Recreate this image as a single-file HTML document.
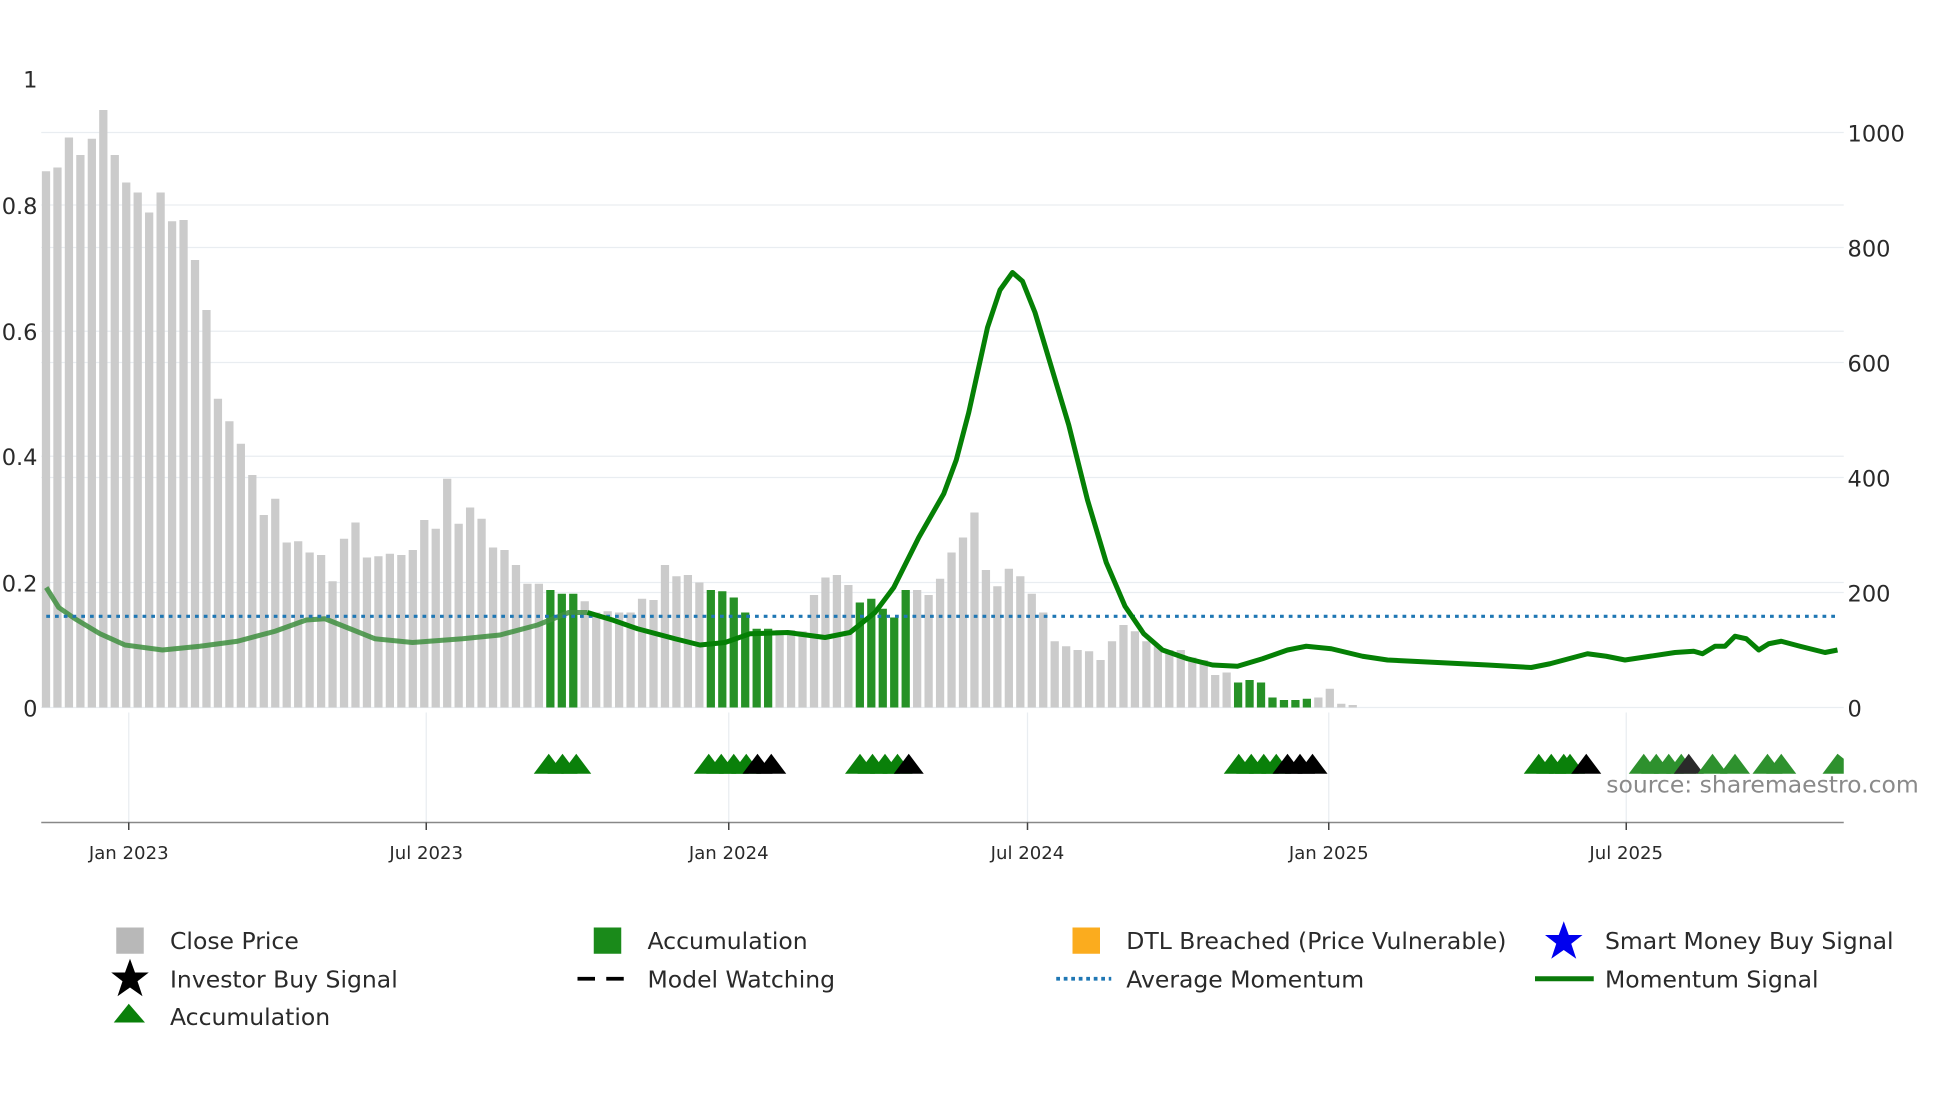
<!DOCTYPE html>
<html><head><meta charset="utf-8"><style>
html,body{margin:0;padding:0;background:#fff;overflow:hidden}
svg{display:block}
text{font-family:"DejaVu Sans","Liberation Sans",sans-serif;fill:#2a2a2a}
</style></head><body>
<svg id="s" width="1960" height="1102" viewBox="0 0 1568 881.6" xmlns="http://www.w3.org/2000/svg">
<g stroke="#e9edf1" stroke-width="1">
<line x1="33" x2="1475" y1="106" y2="106"/><line x1="33" x2="1475" y1="164" y2="164"/>
<line x1="33" x2="1475" y1="198" y2="198"/><line x1="33" x2="1475" y1="265" y2="265"/>
<line x1="33" x2="1475" y1="290" y2="290"/><line x1="33" x2="1475" y1="365" y2="365"/>
<line x1="33" x2="1475" y1="382" y2="382"/><line x1="33" x2="1475" y1="466" y2="466"/>
<line x1="33" x2="1475" y1="474" y2="474"/><line x1="33" x2="1475" y1="566" y2="566"/>
<line x1="103" x2="103" y1="570" y2="658"/><line x1="341" x2="341" y1="570" y2="658"/>
<line x1="583" x2="583" y1="570" y2="658"/><line x1="822" x2="822" y1="570" y2="658"/>
<line x1="1063" x2="1063" y1="570" y2="658"/><line x1="1301" x2="1301" y1="570" y2="658"/>
</g>
<g id="bars"></g>
<path id="m1" fill="none" stroke="#3f8f3f" stroke-width="4" stroke-linejoin="round" opacity="0.85" d=""/>
<line x1="37" x2="1472" y1="493" y2="493" stroke="#1f77b4" stroke-width="2.5" stroke-dasharray="3,4"/>
<path id="m2" fill="none" stroke="#058005" stroke-width="4" stroke-linejoin="round" d=""/>
<g id="tri"></g>
<line x1="33" x2="1475" y1="658" y2="658" stroke="#888" stroke-width="1.2"/>
<g stroke="#444" stroke-width="1.2">
<line x1="103" x2="103" y1="658" y2="664"/><line x1="341" x2="341" y1="658" y2="664"/>
<line x1="583" x2="583" y1="658" y2="664"/><line x1="822" x2="822" y1="658" y2="664"/>
<line x1="1063" x2="1063" y1="658" y2="664"/><line x1="1301" x2="1301" y1="658" y2="664"/>
</g>
<g font-size="14.5" text-anchor="middle">
<text x="103" y="687">Jan 2023</text><text x="341" y="687">Jul 2023</text>
<text x="583" y="687">Jan 2024</text><text x="822" y="687">Jul 2024</text>
<text x="1063" y="687">Jan 2025</text><text x="1301" y="687">Jul 2025</text>
</g>
<g font-size="18" text-anchor="end">
<text x="30" y="70">1</text><text x="30" y="171">0.8</text><text x="30" y="272">0.6</text>
<text x="30" y="372">0.4</text><text x="30" y="473">0.2</text><text x="30" y="573">0</text>
</g>
<g font-size="18">
<text x="1478" y="113">1000</text><text x="1478" y="205">800</text><text x="1478" y="297">600</text>
<text x="1478" y="389">400</text><text x="1478" y="481">200</text><text x="1478" y="573">0</text>
</g>
<text x="1285" y="634" font-size="18.8" style="fill:#8a8a8a">source: sharemaestro.com</text>
<g font-size="18.8">
<rect x="93" y="742" width="22" height="21" fill="#b8b8b8"/><text x="136" y="759">Close Price</text>
<rect x="475" y="742" width="22" height="21" fill="#1a8a1a"/><text x="518" y="759">Accumulation</text>
<rect x="858" y="742" width="22" height="21" fill="#fbac1e"/><text x="901" y="759">DTL Breached (Price Vulnerable)</text>
<polygon fill="#0000ee" points="1251,737 1255,748 1266,748 1257,755 1261,767 1251,760 1241,767 1245,755 1236,748 1247,748"/>
<text x="1284" y="759">Smart Money Buy Signal</text>
<polygon fill="#000" points="104,767 108,778 119,778 110,785 114,797 104,790 94,797 98,785 89,778 100,778"/>
<text x="136" y="790">Investor Buy Signal</text>
<line x1="462" x2="506" y1="783" y2="783" stroke="#000" stroke-width="3" stroke-dasharray="14,9"/>
<text x="518" y="790">Model Watching</text>
<line x1="845" x2="889" y1="783" y2="783" stroke="#1f77b4" stroke-width="3" stroke-dasharray="3,3"/>
<text x="901" y="790">Average Momentum</text>
<line x1="1228" x2="1275" y1="783" y2="783" stroke="#0a7a0a" stroke-width="4"/>
<text x="1284" y="790">Momentum Signal</text>
<polygon fill="#0a800a" points="91,818 103,803 116,818"/>
<text x="136" y="820">Accumulation</text>
</g>
</svg>
<script>
var tops=[137,134,110,124,111,88,124,146,154,170,154,177,176,208,248,319,337,355,380,412,399,434,433,442,444,465,431,418,446,445,443,444,440,416,423,383,419,406,415,438,440,452,467,467,472,475,475,481,490,489,490,490,479,480,452,461,460,466,472,473,478,490,503,503,504,504,505,476,462,460,468,482,479,487,494,472,472,476,463,442,430,410,456,469,455,461,475,490,513,517,520,521,528,513,500,505,513,517,520,520,526,528,540,538,546,544,546,558,560,560,559,558,551,563,564];
var green={44:1,45:1,46:1,58:1,59:1,60:1,61:1,62:1,63:1,71:1,72:1,73:1,74:1,75:1,104:1,105:1,106:1,107:1,108:1,109:1,110:1};
var ns="http://www.w3.org/2000/svg",g=document.getElementById('bars');
for(var i=0;i<tops.length;i++){var x=33.5+i*9.17;var t=tops[i];
var r=document.createElementNS(ns,'rect');r.setAttribute('x',x);r.setAttribute('y',t);r.setAttribute('width',6.6);r.setAttribute('height',566-t);
r.setAttribute('fill',green[i]?'#269126':'#cbcbcb');g.appendChild(r);}
var p1=[[37,470],[47,486],[60,495],[80,507],[100,516],[130,520],[160,517],[190,513],[220,505],[245,496],[260,495],[280,503],[300,511],[330,514],[370,511],[400,508],[430,500],[455,490],[470,490]];
var p2=[[470,490],[490,496],[510,503],[540,511],[560,516],[580,514],[600,507],[630,506],[660,510],[680,506],[700,490],[715,470],[735,430],[755,395],[765,368],[775,330],[790,262],[800,232],[810,218],[818,225],[828,250],[840,290],[855,340],[870,400],[885,450],[900,485],[915,507],[930,520],[950,527],[970,532],[990,533],[1010,527],[1030,520],[1045,517],[1065,519],[1090,525],[1110,528],[1150,530],[1190,532],[1225,534],[1240,531],[1255,527],[1270,523],[1285,525],[1300,528],[1320,525],[1340,522],[1355,521],[1362,523],[1372,517],[1380,517],[1388,509],[1397,511],[1407,520],[1415,515],[1425,513],[1440,517],[1460,522],[1470,520]];
function d(p){return 'M'+p.map(function(a){return a[0]+','+a[1]}).join(' L')}
document.getElementById('m1').setAttribute('d',d(p1));document.getElementById('m2').setAttribute('d',d(p2));
var tr=[[439,'#0a800a'],[450,'#0a800a'],[461,'#0a800a'],[567,'#0a800a'],[577,'#0a800a'],[587,'#0a800a'],[597,'#0a800a'],[606,'#000'],[617,'#000'],[688,'#0a800a'],[698,'#0a800a'],[708,'#0a800a'],[718,'#0a800a'],[727,'#000'],[991,'#0a800a'],[1001,'#0a800a'],[1011,'#0a800a'],[1021,'#0a800a'],[1030,'#000'],[1040,'#000'],[1050,'#000'],[1231,'#0a800a'],[1241,'#0a800a'],[1251,'#0a800a'],[1256,'#0a800a'],[1269,'#000'],[1315,'#2e912e'],[1325,'#2e912e'],[1335,'#2e912e'],[1345,'#2e912e'],[1351,'#2a2a2a'],[1370,'#2e912e'],[1388,'#2e912e'],[1414,'#2e912e'],[1425,'#2e912e'],[1470,'#2e912e']];
var tg=document.getElementById('tri');
tr.forEach(function(a){var p=document.createElementNS(ns,'polygon');var x=a[0];
p.setAttribute('points',(x-12)+',619 '+x+',603 '+Math.min(x+12,1475)+','+(x+12>1475?607:619)+(x+12>1475?' 1475,619':''));p.setAttribute('fill',a[1]);tg.appendChild(p);});
</script>
</body></html>
